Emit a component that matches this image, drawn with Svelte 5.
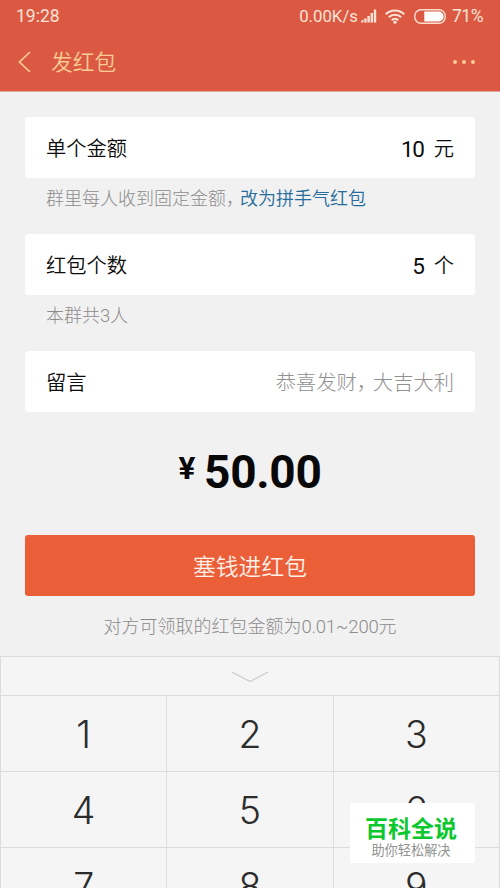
<script>
  const rows = [['1', '2', '3'], ['4', '5', '6'], ['7', '8', '9']];
</script>

<div class="screen">
  <header>
    <div class="status">
      <span class="clock">19:28</span>
      <span class="speed">0.00K/s</span>
      <svg class="signal" width="16" height="14" viewBox="0 0 16 14" fill="#fbe3d5">
        <path d="M0 13.5V12l2.4-1.5v3zM3.2 13.5V9.5h2.4v4zM6.4 13.5V7h2.4v6.5zM9.6 13.5V4H12v9.5zM12.8 13.5V0.5h2.4v13z" />
      </svg>
      <svg class="wifi" width="20" height="15" viewBox="0 0 20 15" fill="none" stroke="#fbe3d5" stroke-width="2">
        <path d="M.8 5.2a13 13 0 0 1 18.4 0M3.8 8.3a8.8 8.8 0 0 1 12.4 0M6.7 11.2a4.7 4.7 0 0 1 6.6 0" />
        <circle cx="10" cy="13.2" r="1.6" fill="#fbe3d5" stroke="none" />
      </svg>
      <svg class="battery" width="32" height="15" viewBox="0 0 32 15">
        <rect x=".8" y=".8" width="30.4" height="13.4" rx="6.2" fill="none" stroke="#fbe0cf" stroke-width="1.4" />
        <path d="M10.3 2.6h14.4a4.9 4.9 0 0 1 0 9.8H10.3z" fill="#fff" />
      </svg>
      <span class="percent">71%</span>
    </div>
    <nav>
      <svg width="14" height="22" viewBox="0 0 14 22" fill="none" stroke="#f9cd94" stroke-width="1.7"><path d="M12 1L1.5 11 12 21" /></svg>
      <h1>发红包</h1>
      <svg class="more" width="24" height="6" viewBox="0 0 24 6" fill="#f9cd94"><circle cx="3" cy="3" r="2" /><circle cx="12" cy="3" r="2" /><circle cx="21" cy="3" r="2" /></svg>
    </nav>
  </header>

  <main>
    <div class="card"><span>单个金额</span><span class="value"><b>10</b>元</span></div>
    <p class="hint">群里每人收到固定金额<i>，</i><a>改为拼手气红包</a></p>
    <div class="card"><span>红包个数</span><span class="value"><b>5</b>个</span></div>
    <p class="hint">本群共<em>3</em>人</p>
    <div class="card"><span>留言</span><span class="placeholder">恭喜发财<i>，</i>大吉大利</span></div>
    <div class="amount"><span class="yen">¥</span><span>50.00</span></div>
    <button>塞钱进红包</button>
    <p class="limit">对方可领取的红包金额为<em>0.01~200</em>元</p>
  </main>

  <section class="keyboard">
    <div class="collapse">
      <svg width="38" height="12" viewBox="0 0 38 12" fill="none" stroke="#cbcbcb" stroke-width="1.3"><path d="M1 1l18 9.5L37 1" /></svg>
    </div>
    {#each rows as row}
      <div class="row">
        {#each row as key}<div class="key">{key}</div>{/each}
      </div>
    {/each}
  </section>

  <aside>
    <strong>百科全说</strong>
    <small>助你轻松解决</small>
  </aside>
</div>

<style>
  .screen {
    position: relative;
    box-sizing: border-box;
    width: 500px;
    height: 888px;
    overflow: hidden;
    display: flex;
    flex-direction: column;
    background: #f1f1f1;
    color: #0c0c0c;
    font-family: "Noto Sans CJK SC", sans-serif;
  }
  header {
    height: 92px;
    flex: none;
    background: #db5943;
    border-bottom: 1px solid #dfa89d;
    box-sizing: border-box;
  }
  .status {
    display: flex;
    align-items: center;
    height: 32px;
    padding: 0 17px 0 16px;
    color: #fbe3d5;
    font: 17.5px/32px Roboto, sans-serif;
  }
  .clock { flex: 1; }
  .speed { font-size: 16.8px; }
  .signal { margin-left: 3px; }
  .wifi { margin-left: 8px; }
  .battery { margin-left: 9px; }
  .percent { margin-left: 6px; font-size: 17.5px; letter-spacing: -0.5px; }
  nav {
    display: flex;
    align-items: center;
    height: 59px;
    padding: 0 24px 0 18px;
  }
  h1 {
    flex: 1;
    margin: -2px 0 0 19px;
    font-size: 21.7px;
    line-height: 30px;
    font-weight: 350;
    color: #f9cd94;
  }
  main {
    display: flex;
    flex-direction: column;
    flex: none;
    height: 564px;
    padding: 25px 25px 0;
    box-sizing: border-box;
  }
  .card {
    display: flex;
    justify-content: space-between;
    align-items: center;
    flex: none;
    height: 61px;
    box-sizing: border-box;
    padding: 0 21px 1px;
    border-radius: 4px;
    background: #fff;
    font-size: 20.3px;
    font-weight: 350;
    line-height: 30px;
  }
  .value { display: flex; align-items: center; }
  .value b { margin: 3px 10px 0 0; font: 400 22.5px/30px Roboto, sans-serif; letter-spacing: -1.3px; }
  .placeholder { color: #909090; font-weight: 300; }
  i { font-style: normal; display: inline-block; width: 14px; }
  .placeholder i { width: 16px; }
  .hint {
    height: 56px;
    flex: none;
    margin: 0;
    padding: 4px 21px 0;
    box-sizing: border-box;
    font-size: 18px;
    line-height: 30px;
    font-weight: 300;
    color: #8c8c8c;
    white-space: nowrap;
  }
  .hint a { color: #266c9c; font-weight: 350; }
  em { font: 300 18.5px/20px Roboto, sans-serif; letter-spacing: -0.2px; }
  .amount {
    display: flex;
    justify-content: center;
    align-items: flex-start;
    height: 122px;
    padding-top: 33px;
    box-sizing: border-box;
    flex: none;
    font: 700 46px/54px Roboto, sans-serif;
    letter-spacing: -0.3px;
    color: #080808;
  }
  .yen { margin-right: 9px; font-size: 31.5px; line-height: 48px; }
  button {
    flex: none;
    height: 61px;
    padding: 0;
    margin-top: 1px;
    border: 0;
    border-radius: 3px;
    background: #eb5f38;
    color: #fff0e8;
    font: 22.8px/60px "Noto Sans CJK SC", sans-serif;
    font-weight: 350;
  }
  .limit {
    margin: 14px 0 0;
    text-align: center;
    font-size: 18px;
    line-height: 30px;
    font-weight: 300;
    color: #8c8c8c;
    white-space: nowrap;
  }
  .keyboard {
    flex: none;
    background: #f5f5f5;
    border: 1px solid #dcdcdc;
  }
  .collapse {
    display: flex;
    align-items: center;
    justify-content: center;
    height: 38px;
    padding-top: 2px;
    box-sizing: border-box;
  }
  .row {
    display: flex;
    height: 76px;
    box-sizing: border-box;
    border-top: 1px solid #dcdcdc;
  }
  .key {
    flex: 1;
    text-align: center;
    font: 300 37.5px/78px Inter, sans-serif;
    color: #2c2c2c;
  }
  .key + .key { border-left: 1px solid #dfdfdf; }
  aside {
    position: absolute;
    left: 350px;
    top: 803px;
    width: 125px;
    height: 60px;
    box-sizing: border-box;
    padding-right: 3px;
    display: flex;
    flex-direction: column;
    align-items: center;
    background: #fff;
  }
  strong { margin-top: 9px; font-size: 23px; line-height: 31px; color: #0bc82e; white-space: nowrap; }
  small { font-size: 13.2px; line-height: 14px; color: #929292; white-space: nowrap; }
</style>
